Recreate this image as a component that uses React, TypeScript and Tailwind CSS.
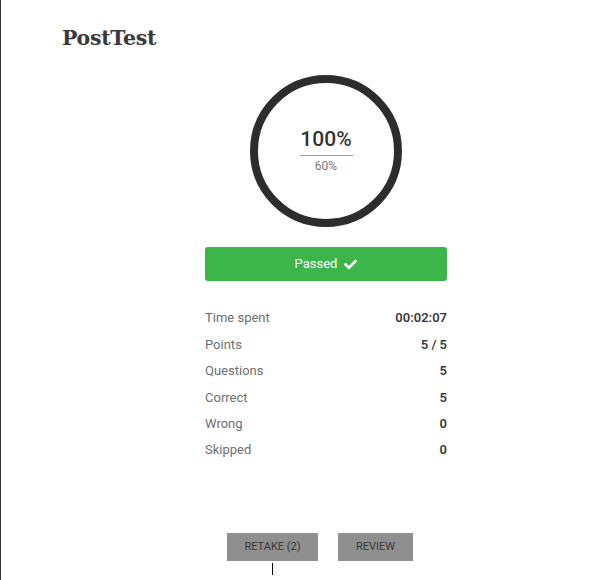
import { FaCheck } from 'react-icons/fa';

const stats = [
  { label: 'Time spent', value: '00:02:07' },
  { label: 'Points', value: '5 / 5' },
  { label: 'Questions', value: '5' },
  { label: 'Correct', value: '5' },
  { label: 'Wrong', value: '0' },
  { label: 'Skipped', value: '0' },
];

export default function App() {
  return (
    <div className="min-h-[580px] w-[604px] border-l border-[#333] bg-white font-['Roboto',sans-serif]">
      <div className="ml-[61px] w-[528px] pt-[24px]">
        <h1 className="text-[20.5px] leading-[28px] font-bold text-[#3a3a3a] font-['DejaVu_Serif',serif] tracking-[-0.3px]">
          PostTest
        </h1>

        <div className="mt-[23px] mx-auto w-[152px] h-[152px] rounded-full border-[8px] border-[#2d2d2d] flex flex-col items-center justify-center">
          <div className="text-[21px] leading-[24px] font-medium text-[#333] -mt-[3px]">100%</div>
          <div className="w-[53px] h-px bg-[#999] mt-[4px]" />
          <div className="text-[12px] leading-[14px] text-[#777] mt-[3px]">60%</div>
        </div>

        <div className="mt-[20px] mx-auto w-[242px] h-[34px] rounded-[3px] bg-[#3cb54b] flex items-center justify-center gap-[7px] text-white text-[13px]">
          <span>Passed</span>
          <FaCheck className="w-[13px] h-[13px]" />
        </div>

        <div className="mx-auto w-[242px] mt-[24px]">
          {stats.map((s) => (
            <div key={s.label} className="h-[26.4px] flex items-center justify-between text-[13px]">
              <span className="text-[#6e6e6e]">{s.label}</span>
              <span className="font-semibold text-[#3a3a3a]">{s.value}</span>
            </div>
          ))}
        </div>

        <div className="mt-[70px] pl-[165px] flex items-start gap-[20px]">
          <div className="flex flex-col items-center">
            <button className="w-[91px] h-[28px] bg-[#8f8f8f] text-[#3a3a3a] text-[11px] uppercase">
              Retake (2)
            </button>
            <div className="w-px h-[12px] bg-black mt-[2px]" />
          </div>
          <button className="w-[75px] h-[28px] bg-[#8f8f8f] text-[#3a3a3a] text-[11px] uppercase">
            Review
          </button>
        </div>
      </div>
    </div>
  );
}
